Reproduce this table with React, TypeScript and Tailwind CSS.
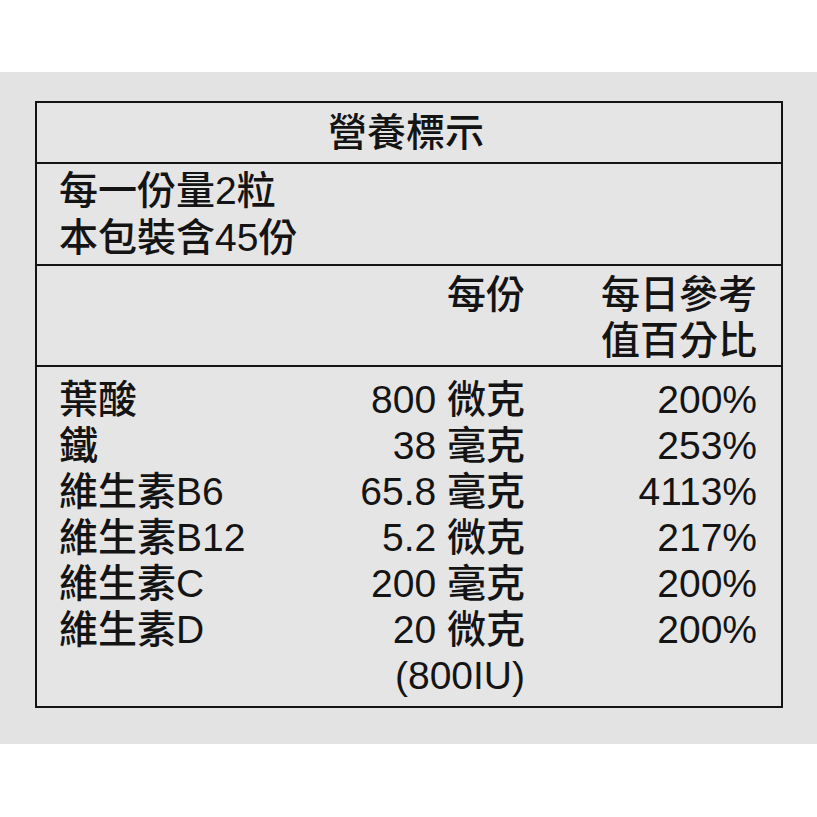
const FONT = "font-['Liberation_Sans','Noto_Sans_CJK_TC',sans-serif]"

// Nutrient rows: name, amount (number + unit), percent of daily value
const ROWS = [
  { name: "葉酸", amount: "800 微克", pct: "200%" },
  { name: "鐵", amount: "38 毫克", pct: "253%" },
  { name: "維生素B6", amount: "65.8 毫克", pct: "4113%" },
  { name: "維生素B12", amount: "5.2 微克", pct: "217%" },
  { name: "維生素C", amount: "200 毫克", pct: "200%" },
  { name: "維生素D", amount: "20 微克", pct: "200%" },
  { name: "", amount: "(800IU)", pct: "" },
]

export default function App() {
  return (
    <div className={`w-[817px] h-[817px] bg-white pt-[72px] text-[#141414] font-medium ${FONT}`}>
      <div className="h-[672px] bg-[#e4e3e3] pt-[29px] pl-[35px]">
        <div className="w-[748px] h-[607px] border-2 border-[#141414] bg-[#e6e5e5] flex flex-col">
          {/* Title */}
          <div className="h-[61px] border-b-2 border-[#141414] flex items-center justify-center text-[39px] leading-none pr-[6px]">
            營養標示
          </div>

          {/* Serving info */}
          <div className="h-[102px] border-b-2 border-[#141414] pl-[22px] pt-[3px] text-[39px] leading-[47px]">
            <div>每一份量2粒</div>
            <div>本包裝含45份</div>
          </div>

          {/* Column headers */}
          <div className="h-[101px] border-b-2 border-[#141414] flex pl-[22px] pr-[24px] pt-[6px] text-[39px] leading-[46px]">
            <div className="flex-1" />
            <div className="w-[200px] text-right">每份</div>
            <div className="w-[232px] text-right">
              <div>每日參考</div>
              <div>值百分比</div>
            </div>
          </div>

          {/* Nutrients */}
          <div className="flex-1 pl-[22px] pr-[24px] pt-[10px] text-[39px] leading-[46px]">
            {ROWS.map((r, i) => (
              <div key={i} className="flex">
                <div className="flex-1 whitespace-nowrap">{r.name}</div>
                <div className="w-[200px] text-right whitespace-pre">{r.amount}</div>
                <div className="w-[232px] text-right">{r.pct}</div>
              </div>
            ))}
          </div>
        </div>
      </div>
    </div>
  )
}
